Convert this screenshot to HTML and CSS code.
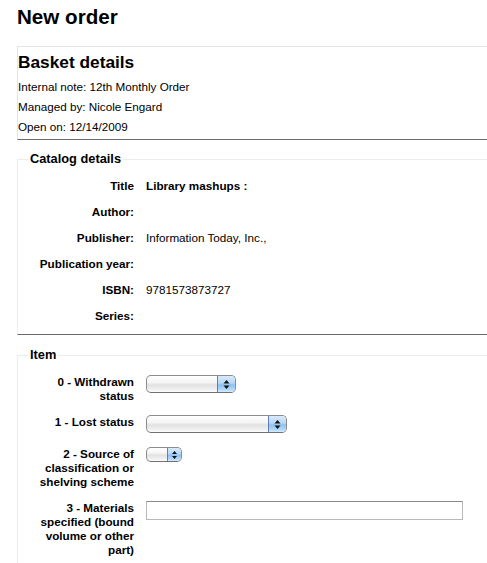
FILE: index.html
```html
<!DOCTYPE html>
<html lang="en">
<head>
<meta charset="utf-8">
<title>New order</title>
<link rel="stylesheet" href="styles.css">
</head>
<body>
<h1 class="page-title">New order</h1>

<div class="basket">
  <h2 class="basket-title">Basket details</h2>
  <p class="basket-line">Internal note: 12th Monthly Order</p>
  <p class="basket-line">Managed by: Nicole Engard</p>
  <p class="basket-line">Open on: 12/14/2009</p>
</div>

<fieldset class="panel">
  <legend class="panel-legend">Catalog details</legend>
  <ol class="rows">
    <li class="row"><span class="row-label">Title</span><span class="row-value row-value-strong">Library mashups :</span></li>
    <li class="row"><span class="row-label">Author:</span><span class="row-value"></span></li>
    <li class="row"><span class="row-label">Publisher:</span><span class="row-value">Information Today, Inc.,</span></li>
    <li class="row"><span class="row-label">Publication year:</span><span class="row-value"></span></li>
    <li class="row"><span class="row-label">ISBN:</span><span class="row-value">9781573873727</span></li>
    <li class="row"><span class="row-label">Series:</span><span class="row-value"></span></li>
  </ol>
</fieldset>

<fieldset class="panel panel-item">
  <legend class="panel-legend">Item</legend>
  <ol class="rows">
    <li class="row">
      <span class="row-label">0 - Withdrawn status</span>
      <span class="popup popup-withdrawn"><span class="popup-fill"></span><span class="popup-cap"><svg class="popup-arrows" width="7" height="9" viewBox="0 0 7 9"><path d="M3.5 0 L6.5 3.5 L0.5 3.5 Z M0.5 5.5 L6.5 5.5 L3.5 9 Z" fill="#111"/></svg></span></span>
    </li>
    <li class="row">
      <span class="row-label">1 - Lost status</span>
      <span class="popup popup-lost"><span class="popup-fill"></span><span class="popup-cap"><svg class="popup-arrows" width="7" height="9" viewBox="0 0 7 9"><path d="M3.5 0 L6.5 3.5 L0.5 3.5 Z M0.5 5.5 L6.5 5.5 L3.5 9 Z" fill="#111"/></svg></span></span>
    </li>
    <li class="row">
      <span class="row-label">2 - Source of classification or shelving scheme</span>
      <span class="popup popup-small"><span class="popup-fill"></span><span class="popup-cap popup-cap-small"><svg class="popup-arrows" width="5" height="8" viewBox="0 0 5 8"><path d="M2.5 0 L5 3 L0 3 Z M0 5 L5 5 L2.5 8 Z" fill="#111"/></svg></span></span>
    </li>
    <li class="row">
      <span class="row-label">3 - Materials specified (bound volume or other part)</span>
      <span class="text-field"></span>
    </li>
  </ol>
</fieldset>
</body>
</html>
```

FILE: styles.css
```css
html {
  overflow: hidden;
}

body {
  margin: 0;
  padding: 0 0 0 17px;
  font-family: "Liberation Sans", Arial, Helvetica, sans-serif;
  font-size: 11.7px;
  color: #000;
  background: #fff;
}

.page-title {
  margin: 5px 0 17px 0;
  font-size: 20.6px;
  line-height: 24px;
  font-weight: bold;
}

.basket {
  border-top: 1px solid #e6e6e6;
  border-left: 1px solid #e6e6e6;
  border-bottom: 1px solid #6a6a6a;
  padding: 5px 0 2px 0;
}

.basket-title {
  margin: 0 0 5px 0;
  font-size: 17.3px;
  line-height: 20px;
  font-weight: bold;
}

.basket-line {
  margin: 0;
  line-height: 20px;
}

.panel {
  margin: 12px 0 0 0;
  padding: 13px 0 11px 10px;
  border: 1px solid #ececec;
  border-right: none;
  border-bottom-color: #6a6a6a;
  min-inline-size: 0;
}

.panel-item {
  margin-top: 13px;
  padding-bottom: 40px;
}

.panel-legend {
  padding: 0 2px;
  font-size: 12.8px;
  font-weight: bold;
  line-height: 14px;
}

.rows {
  list-style: none;
  margin: 0;
  padding: 0;
  display: flex;
  flex-direction: column;
  gap: 12px;
}

.row {
  display: flex;
  align-items: flex-start;
  line-height: 14px;
}

.row-label {
  box-sizing: border-box;
  width: 102px;
  margin-left: 4px;
  margin-right: 12px;
  flex: none;
  text-align: right;
  font-weight: bold;
}

.row-value-strong {
  font-weight: bold;
}

.popup {
  display: flex;
  box-sizing: border-box;
  height: 18px;
  border: 1px solid #8c8c8c;
  border-bottom-color: #707070;
  border-radius: 5px;
  overflow: hidden;
  background: linear-gradient(#ffffff 0%, #f4f4f4 40%, #e2e2e2 55%, #f0f0f0 85%, #ffffff 100%);
  margin-bottom: 2px;
}

.popup-withdrawn {
  width: 90px;
}

.popup-lost {
  width: 141px;
}

.popup-small {
  width: 36px;
  height: 15px;
  border-radius: 5px;
}

.popup-fill {
  flex: 1;
}

.popup-cap {
  width: 17px;
  flex: none;
  display: flex;
  align-items: center;
  justify-content: center;
  border-left: 1px solid #5b7fc0;
  background: linear-gradient(#d9ebfd 0%, #b6d6f6 45%, #8ec1ef 55%, #b2d8fa 85%, #d6ecff 100%);
}

.popup-cap-small {
  width: 13px;
}

.popup-arrows {
  display: block;
}

.text-field {
  display: block;
  box-sizing: border-box;
  width: 317px;
  height: 19px;
  border: 1px solid #b8b8b8;
  border-top-color: #8a8a8a;
  background: #fff;
}
```
